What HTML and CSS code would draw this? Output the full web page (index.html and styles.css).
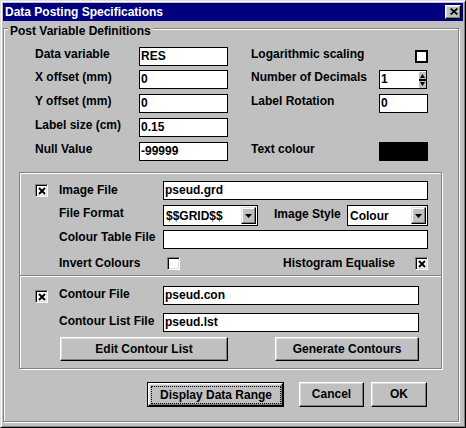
FILE: index.html
```html
<!DOCTYPE html>
<html>
<head>
<meta charset="utf-8">
<link rel="stylesheet" href="styles.css">
</head>
<body>
<div class="window">
  <div class="titlebar">
    <span class="title">Data Posting Specifications</span>
    <span class="tbtn"><svg width="8" height="7" viewBox="0 0 8 7"><path d="M0.6 0.5L7.4 6.5M7.4 0.5L0.6 6.5" stroke="#000" stroke-width="1.7" fill="none"/></svg></span>
  </div>
  <div class="group">
    <div class="group-title">Post Variable Definitions</div>
    <div class="vars">
      <div class="lbl c1">Data variable</div>
      <div class="field c2">RES</div>
      <div class="lbl c4">Logarithmic scaling</div>
      <div class="c5 log-chk"></div>

      <div class="lbl c1">X offset (mm)</div>
      <div class="field c2">0</div>
      <div class="lbl c4">Number of Decimals</div>
      <div class="field spin c5"><span class="spin-val">1</span><svg class="spin-btns" width="7" height="16" viewBox="0 0 7 16"><rect width="7" height="16" fill="#c0c0c0"/><path d="M3.5 2L6 6H1Z" fill="#000"/><rect y="7" width="7" height="2" fill="#000"/><path d="M1 10H6L3.5 14Z" fill="#000"/></svg></div>

      <div class="lbl c1">Y offset (mm)</div>
      <div class="field c2">0</div>
      <div class="lbl c4">Label Rotation</div>
      <div class="field c5">0</div>

      <div class="lbl c1">Label size (cm)</div>
      <div class="field c2">0.15</div>

      <div class="lbl c1">Null Value</div>
      <div class="field c2">-99999</div>
      <div class="lbl c4">Text colour</div>
      <div class="swatch c5"></div>
    </div>

    <div class="inner">
      <div class="section image">
        <div class="chk cb-a"><svg width="8" height="8" viewBox="0 0 8 8"><path d="M1 1L7 7M7 1L1 7" stroke="#000" stroke-width="2"/></svg></div>
        <div class="lbl lbl-a">Image File</div>
        <div class="field">pseud.grd</div>

        <div class="lbl c2i">File Format</div>
        <div class="ctl-row">
          <div class="combo w95"><span class="combo-val">$$GRID$$</span><span class="dd"><svg width="7" height="4" viewBox="0 0 7 4"><path d="M0 0H7L3.5 4Z" fill="#000"/></svg></span></div>
          <div class="lbl style-lbl">Image Style</div>
          <div class="combo w81"><span class="combo-val">Colour</span><span class="dd"><svg width="7" height="4" viewBox="0 0 7 4"><path d="M0 0H7L3.5 4Z" fill="#000"/></svg></span></div>
        </div>

        <div class="lbl c2i lbl-c">Colour Table File</div>
        <div class="field"></div>

        <div class="lbl c2i lbl-d">Invert Colours</div>
        <div class="ctl-row">
          <div class="chk inv-chk"></div>
          <div class="lbl hist-lbl">Histogram Equalise</div>
          <div class="chk hist-chk"><svg width="8" height="8" viewBox="0 0 8 8"><path d="M1 1L7 7M7 1L1 7" stroke="#000" stroke-width="2"/></svg></div>
        </div>
      </div>

      <div class="section contour">
        <div class="chk cb-c"><svg width="8" height="8" viewBox="0 0 8 8"><path d="M1 1L7 7M7 1L1 7" stroke="#000" stroke-width="2"/></svg></div>
        <div class="lbl">Contour File</div>
        <div class="field w256">pseud.con</div>

        <div class="lbl c2i">Contour List File</div>
        <div class="field w256">pseud.lst</div>

        <div class="btnrow">
          <div class="btn b168">Edit Contour List</div>
          <div class="btn b144">Generate Contours</div>
        </div>
      </div>
    </div>

    <div class="footer">
      <div class="default-frame"><div class="btn btn-def"><span class="focus">Display Data Range</span></div></div>
      <div class="btn cancel">Cancel</div>
      <div class="btn ok">OK</div>
    </div>
  </div>
</div>
</body>
</html>
```

FILE: styles.css
```css
html, body {
  margin: 0;
  padding: 0;
  background: #c0c0c0;
}

body {
  font-family: "Liberation Sans", Arial, sans-serif;
  font-weight: bold;
  font-size: 12px;
  color: #000;
}

.window {
  box-sizing: border-box;
  width: 466px;
  height: 428px;
  background: #c0c0c0;
  border: 1px solid;
  border-color: #dfdfdf #000 #000 #dfdfdf;
  box-shadow: inset 1px 1px #fff, inset -1px -1px #808080;
  padding: 2px;
}

/* Title bar */
.titlebar {
  height: 18px;
  background: #000080;
  color: #fff;
  display: flex;
  align-items: center;
  justify-content: space-between;
  padding: 0 2px 0 2px;
}

.title {
  line-height: 18px;
  white-space: nowrap;
}

.tbtn {
  box-sizing: border-box;
  width: 16px;
  height: 14px;
  background: #c0c0c0;
  border: 1px solid;
  border-color: #fff #000 #000 #fff;
  box-shadow: inset -1px -1px #808080, inset 1px 1px #dfdfdf;
  display: flex;
  align-items: center;
  justify-content: center;
  padding: 0 0 1px 1px;
}

/* Group box */
.group {
  box-sizing: border-box;
  margin-top: 7px;
  width: 456px;
  border: 1px solid #808080;
  box-shadow: inset 1px 1px #fff, 1px 1px #fff;
  padding: 0 0 14px 0;
}

.group-title {
  width: fit-content;
  margin: -5px 0 0 4px;
  padding: 0 2px;
  background: #c0c0c0;
  line-height: 14px;
  white-space: nowrap;
}

.lbl {
  line-height: 14px;
  white-space: nowrap;
}

/* Top variables grid */
.vars {
  display: grid;
  grid-template-columns: 104px 89px 23px 128px 49px;
  grid-template-rows: 23px 24px 24px 24px 19px;
  align-items: start;
  margin: 9px 0 0 31px;
}

.c1 { grid-column: 1; }
.c2 { grid-column: 2; }
.c4 { grid-column: 4; }
.c5 { grid-column: 5; }

.field {
  box-sizing: border-box;
  height: 19px;
  border: 1px solid #000;
  background: #fff;
  padding: 0 1px;
  line-height: 17px;
  white-space: nowrap;
  overflow: hidden;
}

.log-chk {
  justify-self: end;
  margin-top: 3px;
  box-sizing: border-box;
  width: 13px;
  height: 13px;
  border: 2px solid #000;
  background: #fff;
}

.spin {
  width: 48px;
  display: flex;
  align-items: center;
  padding-right: 0;
}

.spin-val {
  flex: 1;
}

.spin-btns {
  display: block;
  margin-right: 0;
}

.swatch {
  height: 19px;
  background: #000;
}

/* Inner box */
.inner {
  box-sizing: border-box;
  margin: 11px 0 0 15px;
  width: 423px;
  border: 1px solid #808080;
  box-shadow: inset 1px 1px #fff, 1px 1px #fff;
}

.section {
  display: grid;
  grid-template-columns: 24px 104px 265px;
  align-items: start;
  padding-left: 15px;
}

.section .lbl {
  margin-top: 1px;
}

.c2i { grid-column: 2; }

.image {
  grid-template-rows: 24px 25px 26px 14px;
  padding-top: 8px;
  padding-bottom: 5px;
}

.section .lbl-a { margin-top: 2px; }
.section .lbl-c { margin-top: 0; }
.section .lbl-d { margin-top: 0; }

.contour {
  border-top: 1px solid #808080;
  box-shadow: inset 0 1px #fff;
  grid-template-rows: 27px 24px 24px;
  padding-top: 10px;
  padding-bottom: 7px;
}

.chk {
  box-sizing: border-box;
  width: 13px;
  height: 13px;
  background: #fff;
  border: 1px solid;
  border-color: #808080 #fff #fff #808080;
  box-shadow: inset 1px 1px #000, inset -1px -1px #dfdfdf;
  display: flex;
  align-items: center;
  justify-content: center;
  padding: 1px 0 0 1px;
}

.cb-a { margin-top: 3px; }
.cb-c { margin-top: 4px; }

.ctl-row {
  display: flex;
  align-items: flex-start;
}

.combo {
  box-sizing: border-box;
  height: 21px;
  border: 1px solid #000;
  background: #fff;
  display: flex;
  align-items: flex-start;
  padding: 1px 1px 1px 2px;
}

.w95 { width: 95px; }
.w81 { width: 81px; margin-left: auto; }

.combo-val {
  flex: 1;
  line-height: 17px;
  margin-top: 1px;
  white-space: nowrap;
}

.dd {
  box-sizing: border-box;
  width: 15px;
  height: 17px;
  background: #c0c0c0;
  border: 1px solid;
  border-color: #dfdfdf #000 #000 #dfdfdf;
  box-shadow: inset -1px -1px #808080, inset 1px 1px #fff;
  display: flex;
  align-items: center;
  justify-content: center;
}

.section .style-lbl {
  margin-left: 16px;
  margin-top: 2px;
}

.inv-chk {
  margin-left: 4px;
  margin-top: 1px;
}

.section .hist-lbl {
  margin-left: auto;
  margin-top: 0;
}

.hist-chk {
  margin-left: 20px;
  margin-top: 1px;
}

.w256 {
  width: 256px;
}

.btnrow {
  grid-column: 2 / 4;
  display: flex;
  justify-content: space-between;
  padding: 0 9px 0 1px;
}

/* Buttons */
.btn {
  box-sizing: border-box;
  height: 24px;
  background: #c0c0c0;
  border: 1px solid;
  border-color: #fff #000 #000 #fff;
  box-shadow: inset -1px -1px #808080, inset 1px 1px #dfdfdf;
  display: flex;
  align-items: center;
  justify-content: center;
  line-height: 14px;
  padding-bottom: 1px;
  white-space: nowrap;
}

.b168 { width: 168px; }
.b144 { width: 144px; }

.footer {
  display: flex;
  justify-content: flex-end;
  align-items: flex-start;
  margin-top: 13px;
  padding-right: 31px;
}

.default-frame {
  box-sizing: border-box;
  width: 137px;
  height: 25px;
  border: 1px solid #000;
}

.btn-def {
  width: 100%;
  height: 100%;
  padding: 1px;
  align-items: stretch;
}

.focus {
  flex: 1;
  border: 1px dotted #000;
  display: flex;
  align-items: center;
  justify-content: center;
  margin: 1px 0 0 1px;
}

.cancel {
  width: 65px;
  height: 25px;
  margin-left: 15px;
}

.ok {
  width: 56px;
  height: 25px;
  margin-left: 7px;
}
```
